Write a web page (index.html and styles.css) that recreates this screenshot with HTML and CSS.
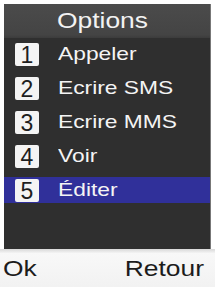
FILE: index.html
```html
<!DOCTYPE html>
<html lang="fr">
<head>
    <meta charset="UTF-8">
    <meta name="viewport" content="width=device-width, initial-scale=1.0">
    <title>Options</title>
    <link rel="stylesheet" href="styles.css">
</head>
<body>
    <div class="phone">
        <div class="screen">
            <div class="title-bar"><span class="wide">Options</span></div>
            <ul class="menu">
                <li class="item"><span class="num">1</span><span class="label wide">Appeler</span></li>
                <li class="item"><span class="num">2</span><span class="label wide">Ecrire SMS</span></li>
                <li class="item"><span class="num">3</span><span class="label wide">Ecrire MMS</span></li>
                <li class="item"><span class="num">4</span><span class="label wide">Voir</span></li>
                <li class="item selected"><span class="num">5</span><span class="label wide">Éditer</span></li>
            </ul>
        </div>
        <div class="softkeys">
            <span class="wide">Ok</span>
            <span class="wide right">Retour</span>
        </div>
    </div>
</body>
</html>
```

FILE: styles.css
```css
* {
    margin: 0;
    padding: 0;
    box-sizing: border-box;
}

body {
    background: #fff;
    font-family: 'Liberation Sans', Arial, sans-serif;
}

.phone {
    width: 215px;
    height: 287px;
    display: flex;
    flex-direction: column;
}

/* the glyphs on this handset are drawn a bit wider than Arial */
.wide {
    display: inline-block;
    transform: scaleX(1.2);
    transform-origin: left center;
}

.wide.right {
    transform-origin: right center;
}

.screen {
    margin: 4px 4px 0 4px;
    height: 245px;
    background: #2f2f2f;
    border-right: 1px solid #777;
}

.title-bar {
    height: 34px;
    background: linear-gradient(#4b4b4b, #444 90%, #3c3c3c);
    color: #f2f2f2;
    font-size: 22px;
    line-height: 34px;
    padding-left: 53px;
}

.menu {
    list-style: none;
    padding-top: 3px;
    display: flex;
    flex-direction: column;
    gap: 8px;
}

.item {
    height: 26px;
    display: flex;
    align-items: center;
    padding-left: 11px;
    color: #f4f4f4;
    font-size: 19px;
}

.item.selected {
    background: #30309a;
}

.num {
    width: 24px;
    height: 23px;
    background: #f4f4f4;
    color: #1e1e1e;
    border-radius: 2px;
    font-size: 23px;
    line-height: 24px;
    text-align: center;
}

.label {
    margin-left: 19px;
}

.softkeys {
    flex: 1;
    display: flex;
    justify-content: space-between;
    align-items: center;
    padding: 2px 11px 0 3px;
    background: linear-gradient(#d8d8d8, #f8f8f8 12%, #f2f2f2);
    color: #1c1c1c;
    font-size: 22px;
}
```
